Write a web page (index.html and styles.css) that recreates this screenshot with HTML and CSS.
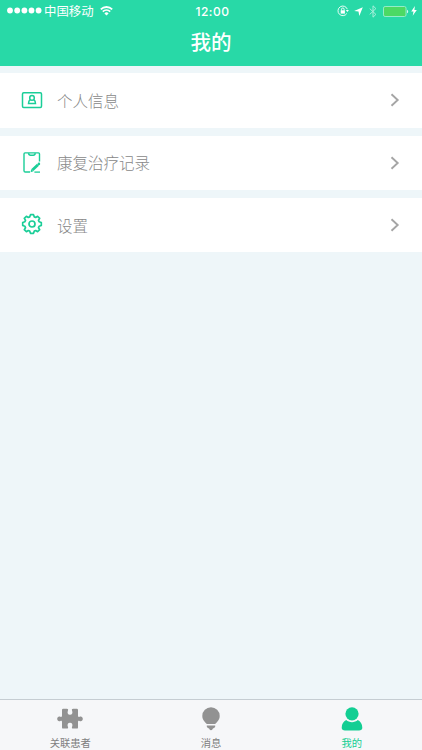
FILE: index.html
```html
<!DOCTYPE html>
<html lang="zh-CN">
<head>
    <meta charset="UTF-8">
    <meta name="viewport" content="width=device-width, initial-scale=1.0">
    <title>我的</title>
    <link rel="stylesheet" href="styles.css">
</head>
<body>
    <header class="header">
        <div class="status-bar">
            <div class="status-left">
                <svg class="signal" width="35" height="8" viewBox="0 0 35 8" fill="#fff">
                    <circle cx="3" cy="3.5" r="2.9"/>
                    <circle cx="10.2" cy="3.5" r="2.9"/>
                    <circle cx="17.4" cy="3.5" r="2.9"/>
                    <circle cx="24.5" cy="3.5" r="2.9"/>
                    <circle cx="31.6" cy="3.5" r="2.9"/>
                </svg>
                <span class="carrier">中国移动</span>
                <svg class="wifi" width="13" height="10" viewBox="0 0 13 10" fill="none" stroke="#fff" stroke-width="1.8">
                    <path d="M.8 3.3a8.2 8.2 0 0 1 11.4 0"/>
                    <path d="M2.8 5.6a5.3 5.3 0 0 1 7.4 0"/>
                    <path d="M4.4 7.4a3 3 0 0 1 4.2 0L6.5 9.6z" fill="#fff" stroke="none"/>
                </svg>
            </div>
            <span class="time">12:00</span>
            <div class="status-right">
                <svg width="12" height="12" viewBox="0 0 12 12" fill="none" stroke="#fff" stroke-width=".9">
                    <path d="M9.8 8.5A4.8 4.8 0 1 1 10.3 4.2"/>
                    <path d="M8.9 5h3l-1.5 2z" fill="#fff" stroke="none"/>
                    <rect x="3.7" y="5.3" width="4.2" height="3.3" fill="#fff" stroke="none"/>
                    <path d="M4.5 5.5V4.3a1.3 1.3 0 0 1 2.6 0v1.2"/>
                </svg>
                <svg class="location" width="9" height="9" viewBox="0 0 9 9" fill="#fff">
                    <path d="M8.8.2L5.3 8.9 4.5 4.5.1 4z"/>
                </svg>
                <svg class="bluetooth" width="8" height="13" viewBox="0 0 8 13" fill="none" stroke="#fff" stroke-width="1">
                    <path d="M.7 3.6l6.2 5.8L4 12.2V.8l2.9 2.8L.7 9.4"/>
                </svg>
                <svg class="battery" width="26" height="11" viewBox="0 0 26 11">
                    <rect x=".5" y=".5" width="22.5" height="10" rx="1.6" fill="#4cd964" stroke="#93edc9"/>
                    <path d="M24 3.7c1.6.5 1.6 3.1 0 3.6z" fill="#d5f8ec"/>
                </svg>
                <svg class="bolt" width="6" height="10" viewBox="0 0 6 10" fill="#fff">
                    <path d="M3.9 0L.2 5.4h2.3L1.7 9.8 5.8 4H3.4z"/>
                </svg>
            </div>
        </div>
        <h1 class="title">我的</h1>
    </header>

    <main class="menu">
        <a class="menu-item">
            <svg class="menu-icon" viewBox="0 0 22 22" fill="none" stroke="#1bce98" stroke-width="1.5">
                <rect x="1.5" y="3.8" width="19" height="14.6" rx="1.2"/>
                <circle cx="11" cy="8.9" r="2.3"/>
                <path d="M9.3 10.7c-1.2.8-1.8 2-1.8 3.7h7c0-1.7-.6-2.9-1.8-3.7"/>
            </svg>
            <span class="menu-text">个人信息</span>
            <svg class="arrow" viewBox="0 0 10 14"><path d="M1.5 1.2l6.2 5.8-6.2 5.8"/></svg>
        </a>
        <a class="menu-item">
            <svg class="menu-icon" viewBox="0 0 22 22" fill="none" stroke="#1bce98" stroke-width="1.4">
                <path d="M9 20H4.300A1.300 1.300 0 0 1 3 18.700V1.900a1 1 0 0 1 1-1H17.500a1 1 0 0 1 1 1v7.600"/>
                <path d="M7.500 1.200c.2 1.800 1 2.100 2 2.100h2.800c1 0 1.800-.3 2-2.100"/>
                <path d="M11.400 18l5.600-5.200" stroke-width="2.800"/>
                <path d="M9.600 20.200l.6-3.200 2.300 2.200z" fill="#1bce98" stroke="none"/>
                <circle cx="17.900" cy="11.900" r="1.300" fill="#1bce98" stroke="none"/>
                <path d="M13.400 20.100H19" stroke-width="1.300"/>
            </svg>
            <span class="menu-text">康复治疗记录</span>
            <svg class="arrow" viewBox="0 0 10 14"><path d="M1.5 1.2l6.2 5.8-6.2 5.8"/></svg>
        </a>
        <a class="menu-item">
            <svg class="menu-icon gear" viewBox="0 0 22 22" fill="none" stroke="#1bce98" stroke-width="1.7" stroke-linejoin="round">
                <path d="M9.5 1.7H12.5L13.3 3.9L14.7 4.5L16.6 3.3L18.7 5.4L17.5 7.3L18.1 8.7L20.3 9.5V12.5L18.1 13.3L17.5 14.7L18.7 16.6L16.6 18.7L14.7 17.5L13.3 18.1L12.5 20.3H9.5L8.7 18.1L7.3 17.5L5.4 18.7L3.3 16.6L4.5 14.7L3.9 13.3L1.7 12.5V9.5L3.9 8.7L4.5 7.3L3.3 5.4L5.4 3.3L7.3 4.5L8.7 3.9Z"/>
                <circle cx="11" cy="11" r="3"/>
            </svg>
            <span class="menu-text">设置</span>
            <svg class="arrow" viewBox="0 0 10 14"><path d="M1.5 1.2l6.2 5.8-6.2 5.8"/></svg>
        </a>
    </main>

    <nav class="tab-bar">
        <a class="tab">
            <svg class="tab-icon" viewBox="0 0 26 26" fill="#929292">
                <path d="M5 4q0-1.200 1.200-1.200h3.600c1.500 0 1.500 1 1.100 1.900-.8 1.900-.2 4 2.100 4s2.900-2.100 2.100-4c-.4-.9-.4-1.900 1.100-1.900h3.600q1.200 0 1.200 1.200v5.600c0 1.300.7 1.500 1.500 1.100 1.800-.8 3.300.2 3.300 2.100s-1.500 2.900-3.300 2.100c-.8-.4-1.500-.2-1.500 1.100v5.400q0 1.200-1.200 1.200h-3.600c-1.500 0-1.500-1-1.100-1.900.8-1.900.2-4-2.100-4s-2.900 2.100-2.100 4c.4.9.4 1.900-1.100 1.900H6.200Q5 22.600 5 21.400V16c0-1.300-.7-1.500-1.500-1.100C1.700 15.700.2 14.700.2 12.800s1.500-2.900 3.300-2.100C4.300 11.100 5 10.900 5 9.600z"/>
            </svg>
            <span>关联患者</span>
        </a>
        <a class="tab">
            <svg class="tab-icon" viewBox="0 0 26 26" fill="#929292">
                <path d="M8.7 18.1C8.2 16.6 4.3 14.6 4.3 9.9a8.7 8.7 0 0 1 17.4 0c0 4.700-3.900 6.700-4.400 8.200z"/>
                <path d="M8.800 19.400h8.400v1c0 1.100-1.600 1.600-2.500 2.400-.4.400-.3 1.500-1.700 1.500s-1.300-1.100-1.700-1.500c-.9-.8-2.500-1.300-2.500-2.400z"/>
            </svg>
            <span>消息</span>
        </a>
        <a class="tab active">
            <svg class="tab-icon" viewBox="0 0 26 26" fill="#13ce93">
                <circle cx="13" cy="7.8" r="6.6"/>
                <path d="M7.2 14.1c1.500 1.400 3.500 2.100 5.800 2.100s4.300-.7 5.800-2.100c2.700 1.200 4.500 4 4.500 7.600 0 2-1.300 2.700-3.300 2.700H6c-2 0-3.300-.7-3.300-2.700 0-3.600 1.800-6.400 4.500-7.600z"/>
            </svg>
            <span>我的</span>
        </a>
    </nav>
</body>
</html>
```

FILE: styles.css
```css
* {
    box-sizing: border-box;
}

body {
    margin: 0;
    height: 100vh;
    display: flex;
    flex-direction: column;
    background-color: #eef6f9;
    font-family: "Liberation Sans", "Noto Sans CJK SC", sans-serif;
}

svg {
    display: block;
    flex: none;
}

.header {
    height: 66px;
    background-color: #28d9a7;
    color: white;
}

.status-bar {
    height: 22px;
    padding: 0 5px 0 7px;
    display: grid;
    grid-template-columns: 1fr auto 1fr;
    align-items: center;
}

.status-left,
.status-right {
    display: flex;
    align-items: center;
}

.status-right {
    justify-content: flex-end;
}

.carrier {
    margin-left: 2px;
    padding-top: 2px;
    font-size: 12.4px;
    line-height: 20px;
}

.wifi {
    margin-left: 6px;
}

.time {
    padding-left: 1px;
    font-family: Inter, sans-serif;
    font-size: 12px;
    font-weight: 500;
    letter-spacing: 0.5px;
}

.location {
    margin-left: 5px;
}

.bluetooth {
    margin-left: 6px;
    opacity: 0.6;
}

.battery {
    margin-left: 6px;
}

.bolt {
    margin-left: 2px;
}

.title {
    margin: 0;
    padding-top: 1px;
    font-size: 20.5px;
    font-weight: 500;
    line-height: 39px;
    text-align: center;
}

.menu {
    flex: 1;
    display: flex;
    flex-direction: column;
    gap: 8px;
    padding-top: 7.3px;
}

.menu-item {
    height: 54.4px;
    padding: 0 22px 0 21px;
    display: flex;
    align-items: center;
    background-color: white;
}

.menu-icon {
    width: 22px;
    height: 22px;
}

.gear {
    margin-bottom: 2px;
}

.menu-text {
    flex: 1;
    margin-left: 14px;
    padding-bottom: 1px;
    color: #888;
    font-size: 15.5px;
    font-weight: 300;
}

.arrow {
    width: 10px;
    height: 14px;
    fill: none;
    stroke: #a5a5a5;
    stroke-width: 1.9;
}

.tab-bar {
    height: 51px;
    display: flex;
    background-color: #f6f7f9;
    border-top: 1px solid #c5cdd2;
}

.tab {
    flex: 1;
    display: flex;
    flex-direction: column;
    align-items: center;
    padding-top: 6px;
    color: #808080;
    font-size: 10.3px;
    line-height: 23px;
}

.tab-icon {
    width: 26px;
    height: 26px;
}

.active {
    color: #13ce93;
}
```
